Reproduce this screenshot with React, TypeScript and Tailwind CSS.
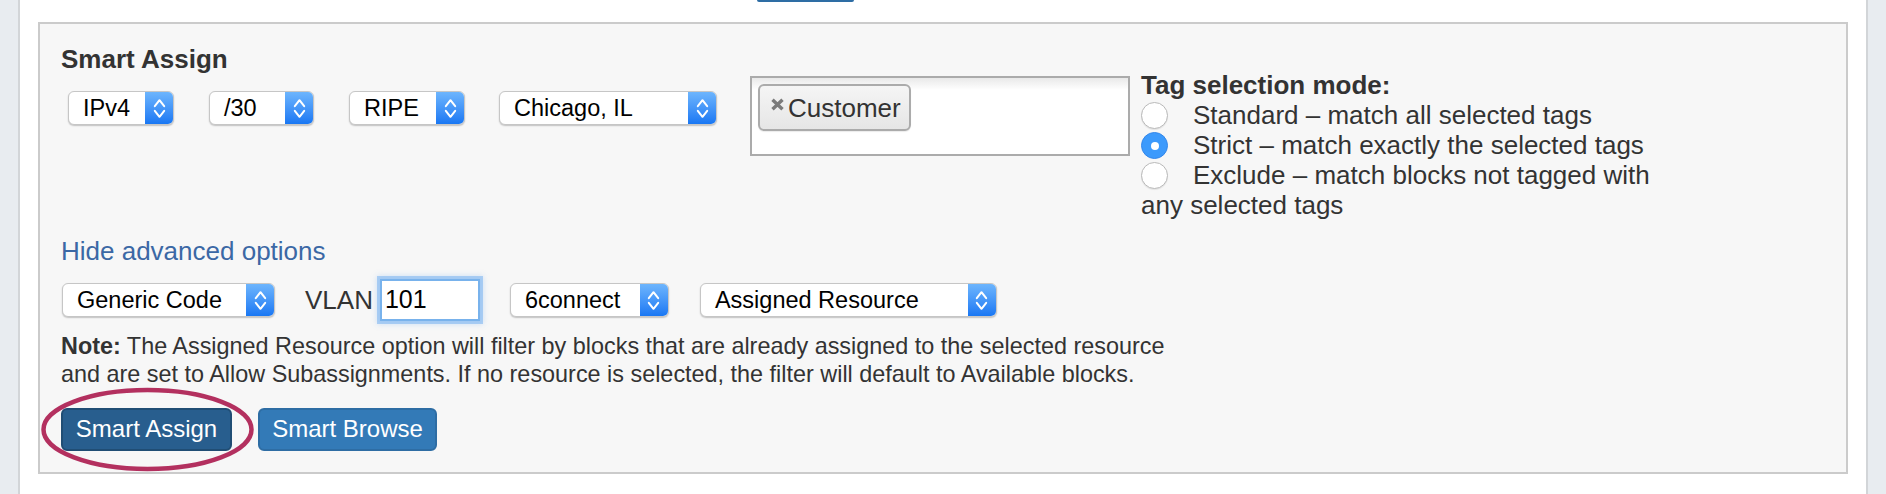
import React from 'react';

// chevrons of the mac popup button
const Chevrons: React.FC = () => (
  <svg width="13" height="21" viewBox="0 0 13 21" fill="none">
    <path d="M1.8 8.2 L6.5 2.2 L11.2 8.2" stroke="white" strokeWidth="2" strokeLinecap="round" strokeLinejoin="round" />
    <path d="M1.8 12.8 L6.5 18.8 L11.2 12.8" stroke="white" strokeWidth="2" strokeLinecap="round" strokeLinejoin="round" />
  </svg>
);

const MacSelect: React.FC<{ label: string; className: string }> = ({ label, className }) => (
  <div
    className={
      'flex h-[34px] shrink-0 rounded-[6px] border border-[#c6c6c6] bg-white shadow-[0_1px_1.5px_rgba(0,0,0,0.22)] ' +
      className
    }
  >
    <span className="flex-1 whitespace-nowrap pl-[14px] text-[23.5px] leading-[32px] text-black">{label}</span>
    <span className="flex w-[28px] items-center justify-center rounded-r-[5px] bg-gradient-to-b from-[#6db5fd] to-[#1877f3]">
      <Chevrons />
    </span>
  </div>
);

const Radio: React.FC<{ checked?: boolean }> = ({ checked }) =>
  checked ? (
    <span className="mt-[2px] mr-[25px] inline-flex h-[27px] w-[27px] items-center justify-center rounded-full border border-[#3487ea] bg-[#3c9afc] align-top">
      <span className="h-[8px] w-[8px] rounded-full bg-white" />
    </span>
  ) : (
    <span className="mt-[2px] mr-[25px] inline-block h-[27px] w-[27px] rounded-full border border-[#b9b9b9] bg-white align-top shadow-[0_1px_1px_rgba(0,0,0,0.08)]" />
  );

const App: React.FC = () => {
  return (
    <div className="relative flex h-[494px] w-[1886px] bg-white font-['Liberation_Sans',Arial,sans-serif]">
      {/* left rail */}
      <div className="w-[20px] border-r-2 border-[#d2d5d8] bg-[#e8ecf0]" />

      <div className="flex flex-1 flex-col">
        {/* bottom edge of the button above */}
        <div className="h-[22px]">
          <div className="ml-[737px] h-[2px] w-[97px] rounded-b-[3px] bg-[#2e6da4]" />
        </div>

        <div className="mx-[18px] h-[452px] border-2 border-[#cbcbcb] bg-[#f7f7f7] pt-[21px] pl-[21px]">
          {/* first row */}
          <div className="flex items-start">
            <div>
              <h3 className="text-[26px] leading-[29px] font-bold text-[#333]">Smart Assign</h3>
              <div className="mt-[17px] ml-[7px] flex">
                <MacSelect label="IPv4" className="w-[106px]" />
                <MacSelect label="/30" className="ml-[35px] w-[105px]" />
                <MacSelect label="RIPE" className="ml-[35px] w-[116px]" />
                <MacSelect label="Chicago, IL" className="ml-[34px] w-[218px]" />
              </div>
            </div>

            <div className="mt-[31px] ml-[33px] h-[80px] w-[380px] border-2 border-[#ababab] bg-[linear-gradient(to_bottom,#e9e9e9_0%,#ffffff_16%)] p-[6px]">
              <div className="flex h-[47px] w-[153px] items-center rounded-[6px] border-2 border-[#ababab] bg-gradient-to-b from-[#f5f5f5] to-[#e6e6e6] pl-[10px] shadow-[0_1px_1px_rgba(0,0,0,0.08)]">
                <svg width="15" height="13" viewBox="0 0 15 13" className="mt-[-6px]">
                  <path d="M2.5 1.8 L12.5 11.2 M12.5 1.8 L2.5 11.2" stroke="#7b7b7b" strokeWidth="3.4" />
                </svg>
                <span className="ml-[3px] text-[26px] leading-[30px] text-[#333]">Customer</span>
              </div>
            </div>

            <div className="mt-[25px] ml-[11px] w-[530px] text-[26px] leading-[30px] text-[#333]">
              <div className="font-bold">Tag selection mode:</div>
              <div>
                <Radio />
                Standard – match all selected tags
              </div>
              <div>
                <Radio checked />
                Strict – match exactly the selected tags
              </div>
              <div>
                <Radio />
                Exclude – match blocks not tagged with any selected tags
              </div>
            </div>
          </div>

          <a className="mt-[16px] block w-fit text-[26px] leading-[30px] text-[#3b68a5]">Hide advanced options</a>

          {/* advanced options */}
          <div className="mt-[13px] flex items-center">
            <MacSelect label="Generic Code" className="ml-[1px] w-[213px]" />
            <span className="ml-[30px] text-[26px] leading-[30px] text-[#333]">VLAN</span>
            <div className="ml-[7px] flex h-[42px] w-[100px] items-center border-2 border-[#78b2ec] bg-white pl-[3px] text-[25px] text-black shadow-[0_0_0_3px_rgba(120,178,240,0.55),0_0_6px_3px_rgba(120,178,240,0.35)]">
              101
            </div>
            <MacSelect label="6connect" className="ml-[30px] w-[159px]" />
            <MacSelect label="Assigned Resource" className="ml-[31px] w-[297px]" />
          </div>

          <p className="mt-[11px] text-[23.4px] leading-[28.4px] text-[#333]">
            <b>Note:</b> The Assigned Resource option will filter by blocks that are already assigned to the selected resource
            <br />
            and are set to Allow Subassignments. If no resource is selected, the filter will default to Available blocks.
          </p>

          <div className="mt-[19px] flex">
            <button className="h-[43px] w-[171px] rounded-[6px] border-2 border-[#204d74] bg-[#285e8e] text-[24px] text-white">
              Smart Assign
            </button>
            <button className="ml-[26px] h-[43px] w-[179px] rounded-[6px] border-2 border-[#2e6da4] bg-[#337ab7] text-[24px] text-white">
              Smart Browse
            </button>
          </div>
        </div>
      </div>

      {/* right rail */}
      <div className="w-[20px] border-l-2 border-[#d2d5d8] bg-[#e8ecf0]" />

      {/* red annotation ring around the button */}
      <svg className="pointer-events-none absolute top-0 left-0" width="1886" height="494">
        <ellipse cx="147.5" cy="429.5" rx="104" ry="39.5" fill="none" stroke="#b3305f" strokeWidth="4.5" />
      </svg>
    </div>
  );
};

export default App;
